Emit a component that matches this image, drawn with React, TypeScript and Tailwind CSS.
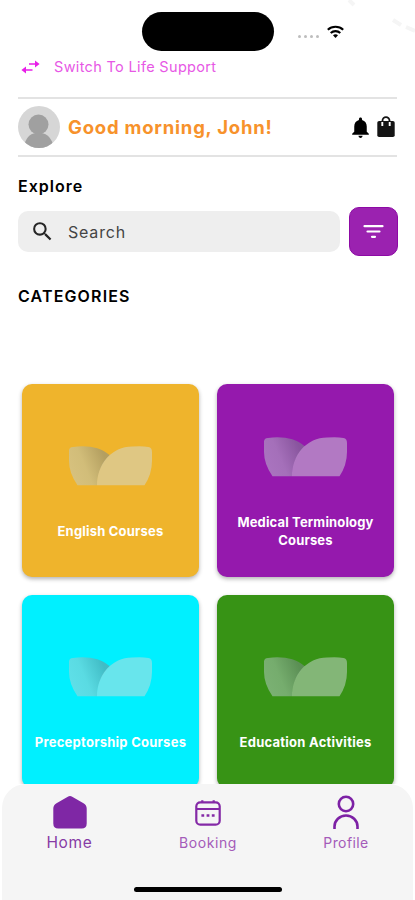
import type { ReactElement } from "react";
import { MdNotifications, MdSearch } from "react-icons/md";

interface Category {
  readonly id: string;
  readonly lines: string[];
  readonly cardClass: string;
  readonly labelClass: string;
}

interface NavItem {
  readonly label: string;
  readonly icon: ReactElement;
  readonly itemClass: string;
  readonly labelClass: string;
}

const cardBase = "flex flex-col items-center rounded-[10px] shadow-[0_2px_4px_rgba(0,0,0,0.3)]";

const categories: Category[] = [
  { id: "english", lines: ["English Courses"], cardClass: "h-[193px] bg-[#efb42c] pt-[62px]", labelClass: "tracking-[0.2px]" },
  { id: "medical", lines: ["Medical Terminology", "Courses"], cardClass: "h-[193px] bg-[#9519ad] pt-[53px]", labelClass: "tracking-[0.15px]" },
  { id: "preceptorship", lines: ["Preceptorship Courses"], cardClass: "h-[193px] bg-[#00f0ff] pt-[62px]", labelClass: "tracking-[0.25px]" },
  { id: "education", lines: ["Education Activities"], cardClass: "h-[193px] bg-[#379315] pt-[62px]", labelClass: "tracking-[0.25px]" }
];

function StatusBar(): ReactElement {
  return (
    <header className="relative flex h-[51px] shrink-0 items-end">
      <div className="ml-[142px] h-[39px] w-[132px] rounded-full bg-black" />
      <div className="mb-[13px] ml-6 flex gap-[3px]">
        <span className="h-[3px] w-[3px] rounded-full bg-[#bdbdbd]" />
        <span className="h-[3px] w-[3px] rounded-full bg-[#bdbdbd]" />
        <span className="h-[3px] w-[3px] rounded-full bg-[#bdbdbd]" />
        <span className="h-[3px] w-[3px] rounded-full bg-[#bdbdbd]" />
      </div>
      <svg className="mb-[12px] ml-[8px] h-[14px] w-[17px]" viewBox="0 0 17 14" fill="none" stroke="#000" strokeWidth="2.1">
        <path d="M0.8 4.7C5 0.7 12 0.7 16.2 4.7" />
        <path d="M3.7 8C6.4 5.5 10.6 5.5 13.3 8" />
        <path d="M6 10.3C7.4 9 9.6 9 11 10.3L8.5 13Z" fill="#000" stroke="none" />
      </svg>
      <svg className="absolute right-0 top-0 h-[50px] w-[70px]" viewBox="0 0 70 50" fill="none" stroke="#f5f5f5" strokeWidth="4">
        <path d="M4 0l5 5M48 20l8 5M61 27l9 4" />
      </svg>
    </header>
  );
}

function SwapIcon(): ReactElement {
  return (
    <svg className="h-[14px] w-[19px]" viewBox="0 0 19 14" fill="#e81fe8">
      <path d="M8 3.2h6V0.4L18.6 4L14 7.6V4.8H8z" />
      <path d="M11.5 9.2H5V6.4L0.4 10L5 13.6V10.8h6.5z" />
    </svg>
  );
}

function AvatarIcon(): ReactElement {
  return (
    <svg className="h-[42px] w-[42px]" viewBox="0 0 42 42">
      <defs>
        <clipPath id="avatar-clip"><circle cx="21" cy="21" r="21" /></clipPath>
      </defs>
      <g clipPath="url(#avatar-clip)">
        <rect width="42" height="42" fill="#d6d6d6" />
        <circle cx="20.5" cy="18.5" r="10" fill="#a0a0a0" />
        <path d="M6.5 38C9 30 13 27 20.5 27S32 30 35 38V42H6.5z" fill="#a0a0a0" />
      </g>
    </svg>
  );
}

function BagIcon(): ReactElement {
  return (
    <svg className="h-[22px] w-[18px]" viewBox="0 0 18 22" fill="none">
      <rect x="0.3" y="5" width="17.4" height="16" rx="1.8" fill="#141414" />
      <path d="M5.5 6V4.6a3.5 3.5 0 0 1 7 0V6" stroke="#141414" strokeWidth="1.8" />
      <path d="M5.3 6V10M12.7 6V10" stroke="#fff" strokeWidth="1.9" />
    </svg>
  );
}

function LeafLogo({ id }: { readonly id: string }): ReactElement {
  const gradientId = `leaf-${id}`;
  return (
    <svg className="h-[40px] w-[84px] shrink-0" viewBox="0 0 84 40">
      <defs>
        <linearGradient id={gradientId} x1="0" y1="0.7" x2="1" y2="0.3">
          <stop offset="0" stopColor="#bfcfd2" stopOpacity="0.5" />
          <stop offset="0.4" stopColor="#b4c6c6" stopOpacity="0.5" />
          <stop offset="0.9" stopColor="#7d8c90" stopOpacity="0.52" />
        </linearGradient>
      </defs>
      <path d="M0 4.5Q0 1.2 4 0.9C20 -0.8 31 1.5 40.8 9.2C32.9 16.3 28 27.2 28 39.3H8.5Q0 27 0 15z" fill={`url(#${gradientId})`} />
      <path d="M28 39.3C28 18 43 0.6 63 0.6Q73 0 79.5 0.9Q83 1.5 83 6V15Q83 28 75.5 39.3z" fill="#d0dada" fillOpacity="0.5" />
    </svg>
  );
}

function HomeIcon(): ReactElement {
  return (
    <svg className="h-[34px] w-[36px]" viewBox="0 0 36 34">
      <path d="M15.8 1.7Q18 0.5 20.2 1.7L31.5 8.2Q34.7 10 34.7 13.5V28.5Q34.7 33.5 29.7 33.5H6.3Q1.3 33.5 1.3 28.5V13.5Q1.3 10 4.5 8.2z" fill="#7f27a5" />
    </svg>
  );
}

function CalendarIcon(): ReactElement {
  return (
    <svg className="h-[34px] w-[28px]" viewBox="0 0 28 34" fill="none" stroke="#8429a6" strokeWidth="2.2">
      <rect x="2.3" y="7.3" width="23.4" height="22.4" rx="4" />
      <path d="M2 14H26M8.3 5.2V7.2M19.7 5.2V7.2" />
      <path d="M7.4 20.5h2.8M12.6 20.5h2.8M17.8 20.5h2.8" strokeWidth="2.6" />
    </svg>
  );
}

function PersonIcon(): ReactElement {
  return (
    <svg className="h-[34px] w-[28px]" viewBox="0 0 28 34" fill="none" stroke="#7d21a5" strokeWidth="2.6">
      <circle cx="14" cy="9" r="7.2" />
      <path d="M2.5 34V31.5a11.5 11 0 0 1 23 0V34" />
    </svg>
  );
}

const navItems: NavItem[] = [
  { label: "Home", icon: <HomeIcon />, itemClass: "pr-[2px]", labelClass: "text-[15.5px] tracking-[0.7px] text-[#873ba5]" },
  { label: "Booking", icon: <CalendarIcon />, itemClass: "pl-px", labelClass: "text-[14px] tracking-[0.6px] text-[#a45bb9]" },
  { label: "Profile", icon: <PersonIcon />, itemClass: "pl-[3px]", labelClass: "text-[14px] tracking-[0.4px] text-[#a45bb9]" }
];

export default function App(): ReactElement {
  return (
    <div className="flex h-[900px] w-[415px] flex-col overflow-hidden bg-white font-['Inter',sans-serif] text-black">
      <StatusBar />

      <main className="flex min-h-0 flex-1 flex-col overflow-hidden">
        <button type="button" className="mx-[18px] flex h-[32px] shrink-0 items-center pl-[3px]">
          <SwapIcon />
          <span className="ml-[14px] whitespace-nowrap text-[14.5px] leading-5 tracking-[0.33px] text-[#e758e5]">Switch To Life Support</span>
        </button>

        <section className="mx-[18px] mt-[14px] flex h-[60px] shrink-0 items-center border-y-2 border-[#e3e3e3]">
          <AvatarIcon />
          <h1 className="ml-[8px] whitespace-nowrap pb-px text-[18.5px] font-bold leading-6 tracking-[0.78px] text-[#f7922b]">Good morning, John!</h1>
          <div className="ml-auto flex items-center gap-[7px] pr-[2px]">
            <MdNotifications className="-mx-[3px] h-[25px] w-[25px]" />
            <BagIcon />
          </div>
        </section>

        <h2 className="ml-[18px] mt-[19px] shrink-0 text-[16px] font-semibold leading-[20px] tracking-[1px]">Explore</h2>

        <div className="ml-[18px] mr-[17px] mt-[11px] flex h-[49px] shrink-0 items-center justify-between">
          <div className="flex h-[41px] w-[322px] items-center rounded-[10px] bg-[#eee] pl-[12px]">
            <MdSearch className="h-[25px] w-[25px] text-[#252525]" />
            <span className="ml-[13px] text-[16px] tracking-[0.8px] text-[#444]">Search</span>
          </div>
          <button type="button" aria-label="Filter" className="grid h-[49px] w-[49px] place-items-center rounded-[10px] border border-[#8d0aa5] bg-[#9b22b0]">
            <svg className="h-[15px] w-[21px]" viewBox="0 0 21 15" fill="none" stroke="#fff" strokeWidth="2.2" strokeLinecap="round">
              <path d="M1.5 2.2H19.5M4.5 7.5H16.5M9 12.8H12" />
            </svg>
          </button>
        </div>

        <h2 className="ml-[18px] mt-[30px] shrink-0 text-[16px] font-semibold leading-[20px] tracking-[1.15px]">CATEGORIES</h2>

        <div className="mt-[78px] grid shrink-0 grid-cols-[177px_177px] gap-x-[18px] gap-y-[18px] pl-[22px]">
          {categories.map((category) => (
            <article key={category.id} className={`${cardBase} ${category.cardClass}`}>
              <LeafLogo id={category.id} />
              <p className={`mt-[36px] whitespace-nowrap text-center text-[13px] font-bold leading-[18px] text-white ${category.labelClass}`}>
                {category.lines.map((line) => <span key={line} className="block">{line}</span>)}
              </p>
            </article>
          ))}
        </div>
      </main>

      <nav className="mx-[2px] flex h-[116px] shrink-0 flex-col items-center rounded-t-[24px] bg-[#f5f5f5]">
        <div className="grid w-full grid-cols-3 pt-[11px]">
          {navItems.map((item) => (
            <a
              key={item.label}
              className={`flex flex-col items-center ${item.itemClass}`}
              aria-current={item.label === "Home" ? "page" : undefined}
            >
              {item.icon}
              <span className={`mt-[4px] leading-5 ${item.labelClass}`}>{item.label}</span>
            </a>
          ))}
        </div>
        <div className="mt-auto mb-[8px] h-[5px] w-[148px] rounded-full bg-black" />
      </nav>
    </div>
  );
}
